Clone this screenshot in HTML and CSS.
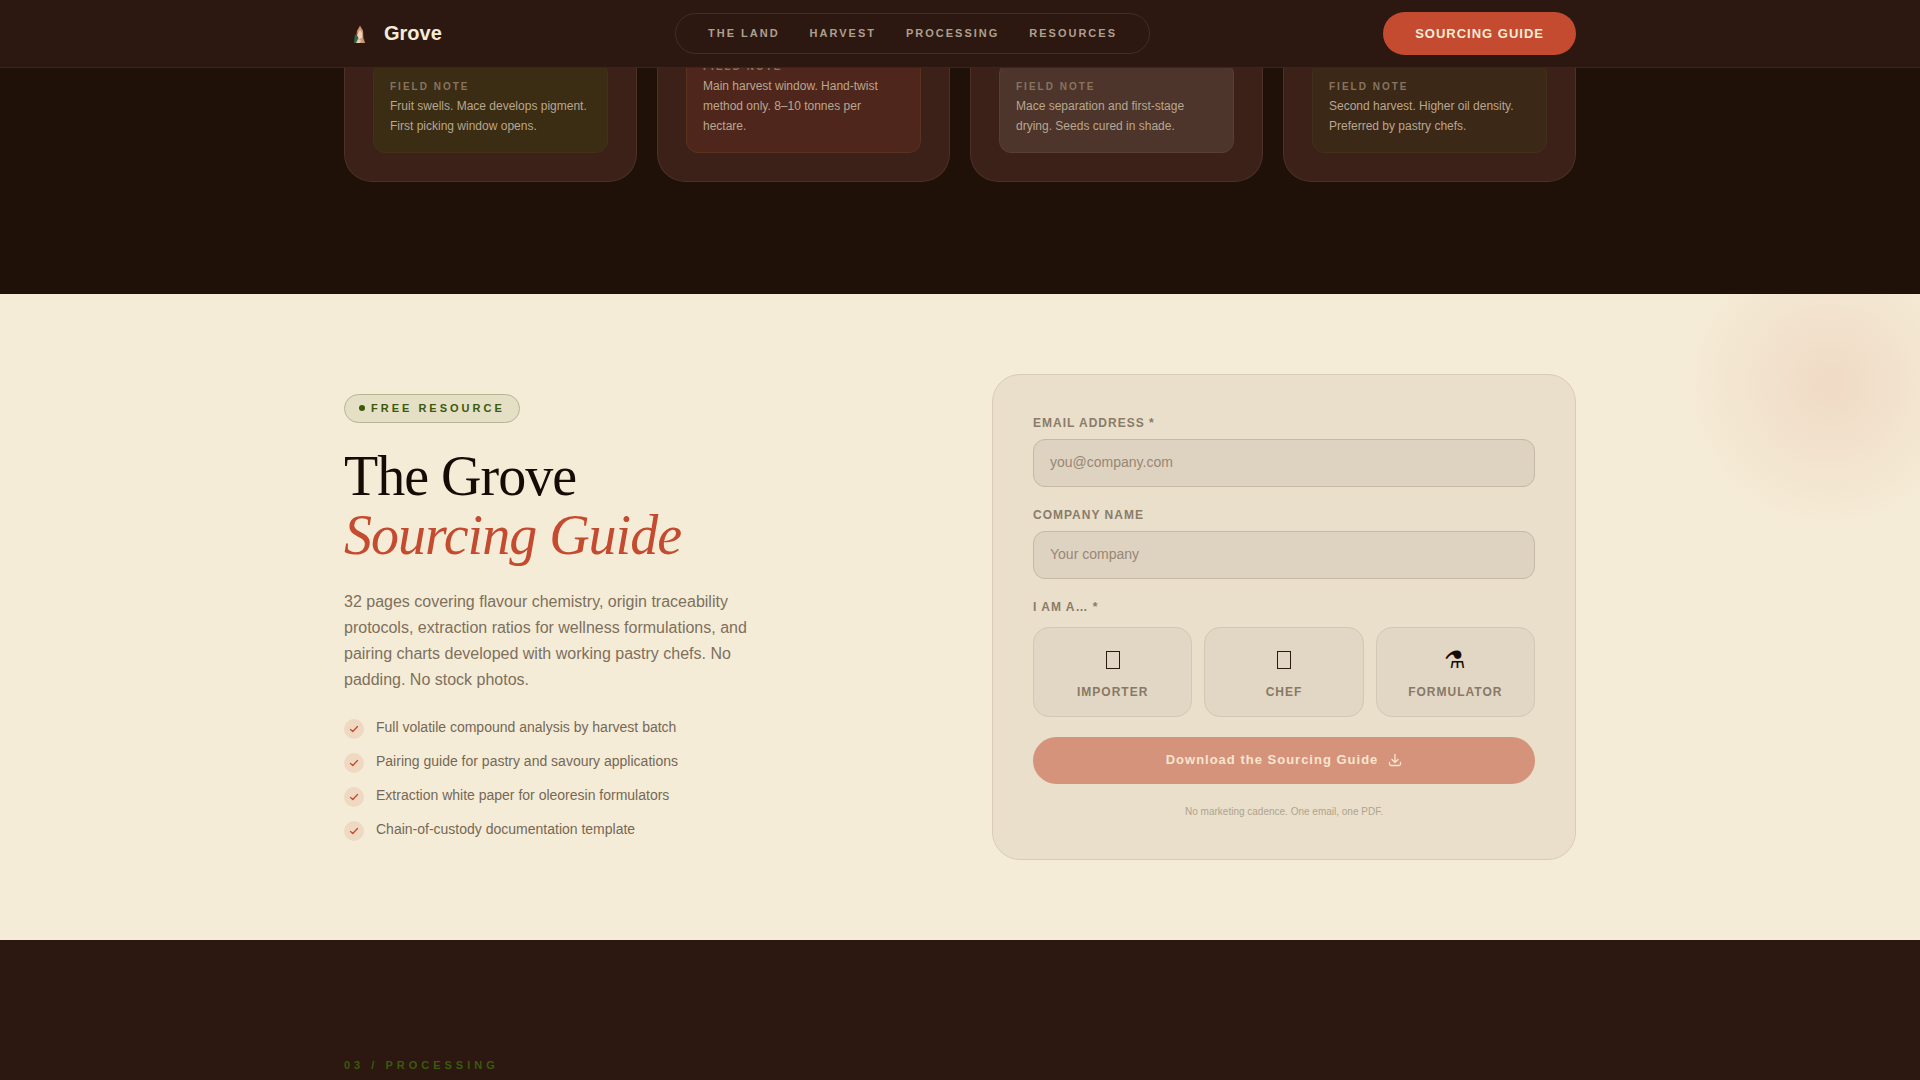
FILE: index.html
```html
<!DOCTYPE html>
<html lang="en">

<head>
  <meta charset="UTF-8">
  <meta name="viewport" content="width=device-width, initial-scale=1.0">
  <title>Grove</title>
  <link rel="stylesheet" href="styles.css">
</head>

<body>
  <header class="header">
    <div class="container header-row">
      <a href="#" class="brand">
        <svg class="brand-mark" viewBox="0 0 32 32" aria-hidden="true">
          <path fill="#6d3a1f" d="M16 7 L19 12 L21 25 H10 L12 15 Z" />
          <path fill="#c99b78" d="M16 8 L19 13 L19 20 L21 25 H16 L14 20 L13 13 Z" />
          <path fill="#ecd3bb" d="M16 12 L18 15 L18 20 L15 21 L13 17 Z" />
          <path fill="#1f6b4a" d="M11 16 L14 20 L14 24 L10 25 Z" />
          <path fill="#e8cdb4" d="M14 21 L17 22 L16 25 H12 Z" />
        </svg>
        <span>Grove</span>
      </a>

      <nav class="nav">
        <a href="#land">The Land</a>
        <a href="#harvest">Harvest</a>
        <a href="#processing">Processing</a>
        <a href="#resources">Resources</a>
      </nav>

      <a href="#resources" class="cta">Sourcing Guide</a>
    </div>
  </header>

  <main>
    <section class="harvest" id="harvest">
      <div class="container season-grid">
        <article class="season">
          <div class="note note-green">
            <h4>Field Note</h4>
            <p>Fruit swells. Mace develops pigment. First picking window opens.</p>
          </div>
        </article>
        <article class="season">
          <div class="note note-red">
            <h4>Field Note</h4>
            <p>Main harvest window. Hand-twist method only. 8–10 tonnes per hectare.</p>
          </div>
        </article>
        <article class="season">
          <div class="note note-light">
            <h4>Field Note</h4>
            <p>Mace separation and first-stage drying. Seeds cured in shade.</p>
          </div>
        </article>
        <article class="season">
          <div class="note note-olive">
            <h4>Field Note</h4>
            <p>Second harvest. Higher oil density. Preferred by pastry chefs.</p>
          </div>
        </article>
      </div>
    </section>

    <section class="guide" id="resources">
      <div class="guide-glow"></div>
      <div class="container guide-grid">
        <div class="guide-copy">
          <span class="badge">Free Resource</span>
          <h2>The Grove<br><em>Sourcing Guide</em></h2>
          <p class="lead">32 pages covering flavour chemistry, origin traceability protocols, extraction ratios for wellness formulations, and pairing charts developed with working pastry chefs. No padding. No stock photos.</p>
          <ul class="checks">
            <li>
              <span class="check"><svg viewBox="0 0 10 10" aria-hidden="true"><path d="M1.5 5.5 L3.8 7.5 L8.5 2.5" /></svg></span>
              Full volatile compound analysis by harvest batch
            </li>
            <li>
              <span class="check"><svg viewBox="0 0 10 10" aria-hidden="true"><path d="M1.5 5.5 L3.8 7.5 L8.5 2.5" /></svg></span>
              Pairing guide for pastry and savoury applications
            </li>
            <li>
              <span class="check"><svg viewBox="0 0 10 10" aria-hidden="true"><path d="M1.5 5.5 L3.8 7.5 L8.5 2.5" /></svg></span>
              Extraction white paper for oleoresin formulators
            </li>
            <li>
              <span class="check"><svg viewBox="0 0 10 10" aria-hidden="true"><path d="M1.5 5.5 L3.8 7.5 L8.5 2.5" /></svg></span>
              Chain-of-custody documentation template
            </li>
          </ul>
        </div>

        <form class="form">
          <div class="field">
            <label for="email">Email Address *</label>
            <input type="email" id="email" placeholder="you@company.com">
          </div>
          <div class="field">
            <label for="company">Company Name</label>
            <input type="text" id="company" placeholder="Your company">
          </div>
          <div class="field field-roles" role="group" aria-labelledby="role-label">
            <span class="field-label" id="role-label">I am a… *</span>
            <div class="roles">
              <button type="button" class="role">
                <svg class="role-icon" viewBox="0 0 20 24" aria-hidden="true"><rect x="3.5" y="3.5" width="13" height="17" /></svg>
                Importer
              </button>
              <button type="button" class="role">
                <svg class="role-icon" viewBox="0 0 20 24" aria-hidden="true"><rect x="3.5" y="3.5" width="13" height="17" /></svg>
                Chef
              </button>
              <button type="button" class="role">
                <span class="role-icon" aria-hidden="true">⚗</span>
                Formulator
              </button>
            </div>
          </div>
          <button type="submit" class="submit">
            Download the Sourcing Guide
            <svg viewBox="0 0 14 14" aria-hidden="true"><path d="M7 1.5 V9 M4 6.5 L7 9.5 L10 6.5 M1.5 9.5 V11 Q1.5 12.5 3 12.5 H11 Q12.5 12.5 12.5 11 V9.5" /></svg>
          </button>
          <p class="fine-print">No marketing cadence. One email, one PDF.</p>
        </form>
      </div>
    </section>

    <section class="processing" id="processing">
      <div class="container">
        <p class="eyebrow">03 / Processing</p>
      </div>
    </section>
  </main>
</body>

</html>
```
FILE: styles.css
```css
:root {
  --ink: #1f1008;
  --bark: #2c1810;
  --cream: #f5ecd7;
  --mace: #c44b2f;
  --leaf: #3a5a0c;
}

* {
  box-sizing: border-box;
  margin: 0;
  padding: 0;
}

body {
  background: var(--bark);
  color: var(--cream);
  font-family: "Liberation Sans", Arial, sans-serif;
  overflow-x: hidden;
}

a {
  color: inherit;
  text-decoration: none;
}

button,
input {
  font-family: inherit;
}

.container {
  width: 100%;
  max-width: 1280px;
  margin: 0 auto;
  padding: 0 24px;
}

/* Header */
.header {
  position: fixed;
  top: 0;
  left: 0;
  right: 0;
  z-index: 10;
  background: var(--bark);
  border-bottom: 1px solid #3a2620;
}

.header-row {
  display: flex;
  align-items: center;
  justify-content: space-between;
  padding-top: 12px;
  padding-bottom: 12px;
}

.brand {
  display: flex;
  align-items: center;
  gap: 8px;
  font-size: 20px;
  font-weight: bold;
}

.brand-mark {
  width: 32px;
  height: 32px;
}

.nav {
  display: flex;
  gap: 30px;
  padding: 12px 32px;
  border: 1px solid #422e25;
  border-radius: 24px;
  color: #ae9f8e;
  font-size: 11px;
  font-weight: bold;
  line-height: 15px;
  letter-spacing: 2px;
  text-transform: uppercase;
}

.cta {
  padding: 12px 32px;
  border-radius: 24px;
  background: var(--mace);
  font-size: 13px;
  font-weight: bold;
  line-height: 19px;
  letter-spacing: 1px;
  text-transform: uppercase;
}

/* Harvest calendar */
.harvest {
  padding-bottom: 112px;
  background: var(--ink);
}

.season-grid {
  display: grid;
  grid-template-columns: repeat(4, 1fr);
  gap: 20px;
}

.season {
  display: flex;
  flex-direction: column;
  justify-content: flex-end;
  min-height: 182px;
  padding: 28px;
  border: 1px solid #4b3127;
  border-top: 0;
  border-radius: 0 0 28px 28px;
  background: #3c2118;
}

.note {
  padding: 16px;
  border: 1px solid;
  border-radius: 12px;
}

.note h4 {
  margin-bottom: 2px;
  color: #877460;
  font-size: 10px;
  line-height: 15px;
  letter-spacing: 2px;
  text-transform: uppercase;
}

.note p {
  color: #b9a68f;
  font-size: 12px;
  line-height: 20px;
}

.note-green {
  background: #3b2c14;
  border-color: #433118;
}

.note-red {
  background: #4f261c;
  border-color: #59331f;
}

.note-light {
  background: #4e352b;
  border-color: #583e33;
}

.note-olive {
  background: #3b2817;
  border-color: #442f1c;
}

/* Sourcing guide */
.guide {
  position: relative;
  overflow: hidden;
  padding: 80px 0;
  background: var(--cream);
}

.guide-glow {
  position: absolute;
  top: -60px;
  right: -60px;
  width: 300px;
  height: 300px;
  background: radial-gradient(circle closest-side, rgba(196, 75, 47, 0.11), transparent);
}

.guide-grid {
  position: relative;
  display: grid;
  grid-template-columns: 1fr 1fr;
  gap: 64px;
  align-items: center;
}

.badge {
  display: inline-flex;
  align-items: center;
  gap: 6px;
  padding: 6px 14px;
  border: 1px solid #b5b593;
  border-radius: 16px;
  background: #e5dfc6;
  color: var(--leaf);
  font-size: 11px;
  font-weight: bold;
  line-height: 15px;
  letter-spacing: 3px;
  text-transform: uppercase;
}

.badge::before {
  content: "";
  width: 6px;
  height: 6px;
  border-radius: 50%;
  background: currentColor;
}

.guide h2 {
  margin: 24px 0;
  color: #150c06;
  font-family: "Liberation Serif", "Times New Roman", serif;
  font-size: 56px;
  font-weight: normal;
  line-height: 59px;
  letter-spacing: -1px;
}

.guide h2 em {
  color: var(--mace);
}

.lead {
  max-width: 420px;
  color: #7d705d;
  font-size: 16px;
  line-height: 26px;
}

.checks {
  display: grid;
  gap: 12px;
  margin-top: 24px;
  list-style: none;
}

.checks li {
  display: flex;
  gap: 12px;
  color: #766855;
  font-size: 14px;
  line-height: 20px;
}

.check {
  display: grid;
  place-items: center;
  width: 20px;
  height: 20px;
  margin-top: 2px;
  border-radius: 50%;
  background: #efd9c3;
}

.check svg {
  width: 10px;
  height: 10px;
  fill: none;
  stroke: var(--mace);
  stroke-width: 1.3;
  stroke-linecap: round;
  stroke-linejoin: round;
}

.form {
  display: grid;
  gap: 20px;
  padding: 40px;
  border: 1px solid #d8ccb6;
  border-radius: 28px;
  background: #e9dfca;
}

.field {
  display: grid;
  gap: 8px;
}

.field-roles {
  gap: 12px;
}

.field label,
.field-label {
  color: #8a7c69;
  font-size: 12px;
  font-weight: bold;
  line-height: 16px;
  letter-spacing: 1px;
  text-transform: uppercase;
}

.field input {
  width: 100%;
  height: 48px;
  padding: 0 16px 2px;
  border: 1px solid #c6b9a4;
  border-radius: 12px;
  background: #ded3c0;
  color: #150c06;
  font-size: 14px;
}

.field input::placeholder {
  color: #978775;
}

.roles {
  display: grid;
  grid-template-columns: repeat(3, 1fr);
  gap: 12px;
}

.role {
  display: flex;
  flex-direction: column;
  align-items: center;
  gap: 8px;
  padding: 16px 12px;
  border: 1px solid #d3c8b4;
  border-radius: 16px;
  background: #e2d7c4;
  color: #877966;
  font-size: 12px;
  font-weight: bold;
  line-height: 16px;
  letter-spacing: 1px;
  text-transform: uppercase;
}

.role-icon {
  height: 32px;
  color: #150c06;
  font-size: 24px;
  font-weight: normal;
  line-height: 32px;
}

svg.role-icon {
  width: 20px;
  fill: none;
  stroke: #2a1a0e;
}

.submit {
  display: flex;
  align-items: center;
  justify-content: center;
  gap: 10px;
  height: 47px;
  padding-bottom: 2px;
  border: 0;
  border-radius: 24px;
  background: #d5937b;
  color: #f8e5cf;
  font-size: 13px;
  font-weight: bold;
  letter-spacing: 1px;
}

.submit svg {
  width: 14px;
  height: 14px;
  fill: none;
  stroke: currentColor;
  stroke-width: 1.3;
  stroke-linecap: round;
  stroke-linejoin: round;
}

.fine-print {
  color: #b0a38e;
  font-size: 10px;
  line-height: 15px;
  text-align: center;
}

/* Processing */
.processing {
  padding-top: 117px;
}

.eyebrow {
  color: var(--leaf);
  font-size: 11px;
  font-weight: bold;
  line-height: 16px;
  letter-spacing: 4px;
  text-transform: uppercase;
}
```
